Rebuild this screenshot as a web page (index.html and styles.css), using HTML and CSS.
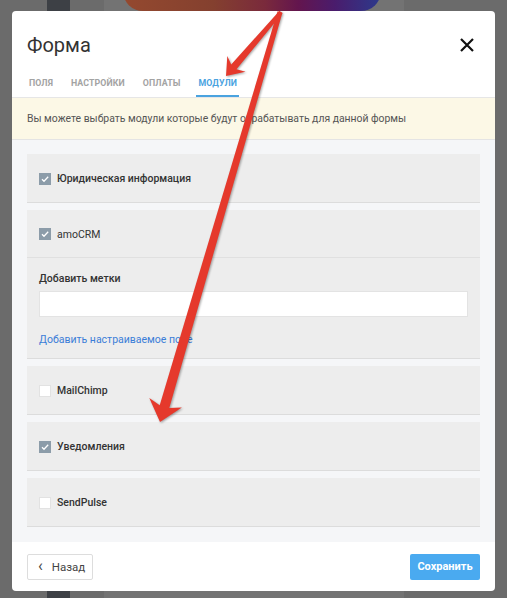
FILE: index.html
```html
<!DOCTYPE html>
<html lang="ru">
<head>
<meta charset="utf-8">
<title>Форма</title>
<link rel="stylesheet" href="styles.css">
</head>
<body>
<div class="backdrop">
  <div class="bg-strip"></div>
  <div class="bg-card"></div>
  <div class="bg-blob"></div>
</div>

<div class="modal">
  <div class="modal-head">
    <div class="title-row">
      <h1 class="title">Форма</h1>
      <svg class="close" width="16" height="16" viewBox="0 0 16 16"><path d="M2 2 L14 14 M14 2 L2 14" stroke="#111" stroke-width="2.2" fill="none"/></svg>
    </div>
    <div class="tabs">
      <div class="tab">Поля</div>
      <div class="tab">Настройки</div>
      <div class="tab">Оплаты</div>
      <div class="tab active">Модули</div>
    </div>
  </div>

  <div class="notice">Вы можете выбрать модули которые будут обрабатывать для данной формы</div>

  <div class="content">
    <div class="panel">
      <div class="panel-row"><span class="cb checked"><svg width="12" height="12" viewBox="0 0 12 12"><path d="M3 6.2 L5 8.2 L9.2 3.8" stroke="#fff" stroke-width="1.3" fill="none"/></svg></span><span class="label">Юридическая информация</span></div>
    </div>
    <div class="panel">
      <div class="panel-row split"><span class="cb checked"><svg width="12" height="12" viewBox="0 0 12 12"><path d="M3 6.2 L5 8.2 L9.2 3.8" stroke="#fff" stroke-width="1.3" fill="none"/></svg></span><span class="label light">amoCRM</span></div>
      <div class="panel-body">
        <div class="field-label">Добавить метки</div>
        <div class="input"></div>
        <a class="link">Добавить настраиваемое поле</a>
      </div>
    </div>
    <div class="panel">
      <div class="panel-row"><span class="cb"></span><span class="label">MailChimp</span></div>
    </div>
    <div class="panel">
      <div class="panel-row"><span class="cb checked"><svg width="12" height="12" viewBox="0 0 12 12"><path d="M3 6.2 L5 8.2 L9.2 3.8" stroke="#fff" stroke-width="1.3" fill="none"/></svg></span><span class="label">Уведомления</span></div>
    </div>
    <div class="panel">
      <div class="panel-row"><span class="cb"></span><span class="label">SendPulse</span></div>
    </div>
  </div>

  <div class="footer">
    <button class="btn back"><span class="chev">‹</span>Назад</button>
    <button class="btn save">Сохранить</button>
  </div>
</div>

<svg class="arrows" width="507" height="598" viewBox="0 0 507 598">
  <g fill="#e5392c" class="arrow-shapes">
    <polygon points="279.5,10.7 282.5,13.3 236.5,69.2 245.5,71.7 226,76 227.3,56.1 231.2,64.6"/>
    <polygon points="277.6,11.3 282.4,12.7 169.3,408 181.9,407.6 160,422 149.3,398 159.7,405.2"/>
  </g>
</svg>
</body>
</html>
```

FILE: styles.css
```css
* { box-sizing: border-box; }
html, body { margin: 0; padding: 0; }
body {
  background: #6b6b6b;
  font-family: Roboto, "Liberation Sans", Arial, sans-serif;
  color: #333;
  width: 507px;
  height: 598px;
  overflow: hidden;
  position: relative;
  padding: 11px 12px 0 12px;
}
.backdrop { position: absolute; inset: 0; z-index: 0; }
.bg-strip { position: absolute; left: 47px; top: 0; width: 23px; height: 598px; background: #3d4045; }
.bg-card { position: absolute; left: 104px; top: 0; width: 300px; height: 598px; background: #737373; }
.bg-blob {
  position: absolute; left: 123px; top: -30px; width: 258px; height: 41px;
  border-radius: 20px;
  background: linear-gradient(90deg, #94492f 0%, #84402f 35%, #7a2a3c 55%, #63154e 68%, #4a1c6c 82%, #2c3a8c 100%);
}
.modal {
  position: relative; z-index: 1;
  width: 483px; height: 580px;
  background: #fff;
  border-radius: 4px;
  display: flex; flex-direction: column;
  overflow: hidden;
}
.modal-head { padding: 22px 15px 0 15px; border-bottom: 1px solid #e6e6e6; }
.title-row { display: flex; justify-content: space-between; align-items: center; height: 24px; }
.title { margin: 0; font-size: 20px; font-weight: 400; line-height: 24px; color: #333; }
.close { margin-right: 5px; margin-top: 0; }
.tabs { display: flex; gap: 14px; margin-top: 15px; }
.tab {
  font-size: 8.8px; font-weight: 700; letter-spacing: 0.1px; text-transform: uppercase;
  color: #a3a3a3; padding: 6px 2px 7px; border-bottom: 2px solid transparent; line-height: 10px;
}
.tab.active { color: #4aa3df; border-bottom-color: #4aa3df; }
.notice {
  background: #fcf8e6; padding: 14px 15px 14px; font-size: 10.4px; line-height: 13px; color: #555;
  border-bottom: 1px solid #e4e4e4;
}
.content {
  flex: 1; background: #f5f6f8; padding: 14px 15px 15px;
  display: flex; flex-direction: column; gap: 7px;
}
.panel { background: #ededed; border-bottom: 1px solid #dcdcdc; }
.panel-row { height: 48px; display: flex; align-items: center; padding: 1px 12px 0; gap: 6px; }
.panel-row.split { border-bottom: 1px solid #e0e0e0; }
.cb { width: 12px; height: 12px; background: #fff; border: 1px solid #e2e2e2; display: inline-flex; }
.cb.checked { background: #8c9ca9; border-color: #8c9ca9; }
.cb svg { margin: -1px; }
.label { font-size: 10.5px; font-weight: 500; color: #333; }
.label.light { font-weight: 400; }
.panel-body { padding: 14px 12px 12px; height: 100px; }
.field-label { font-size: 10.5px; font-weight: 500; line-height: 14px; color: #333; }
.input { margin-top: 5px; height: 26px; background: #fff; border: 1px solid #e3e3e3; }
.link { display: block; margin-top: 16px; font-size: 10.5px; line-height: 14px; color: #3b7dd8; }
.footer { height: 49px; display: flex; justify-content: space-between; align-items: center; padding: 0 15px; }
.btn { height: 26px; font-family: inherit; font-size: 11.5px; border-radius: 2px; cursor: pointer; }
.back { width: 66px; background: #fff; border: 1px solid #ddd; color: #444; display: flex; align-items: center; padding: 0 0 0 10px; gap: 9px; }
.chev { font-size: 16px; line-height: 14px; margin-top: -2px; }
.save { width: 70px; background: #4aaaf0; border: none; color: #fff; font-weight: 700; font-size: 11px; padding: 0; }
.arrows { position: absolute; left: 0; top: 0; z-index: 2; pointer-events: none; }
.arrow-shapes { filter: drop-shadow(1px 1px 1px rgba(0,0,0,0.35)); }
```
